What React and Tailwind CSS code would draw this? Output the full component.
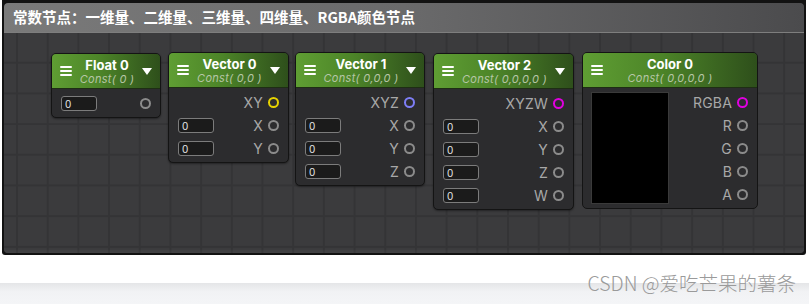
import React from "react";

const Port = ({ label, color }) => (
  <div className="flex items-center ml-auto">
    <span className="text-[14px] leading-none text-[#a8a8a8] tracking-[0.2px]">{label}</span>
    <span
      className="ml-[5px] w-[11px] h-[11px] rounded-full border-[2.5px] box-border"
      style={{ borderColor: color || "#8b8b8b" }}
    />
  </div>
);

const Field = () => (
  <div className="w-[36px] h-[15px] rounded-[3px] border border-[#7c7c7c] bg-[#1b1b1b] flex items-center pl-[3px] text-[10px] leading-none text-[#e6e6e6]">
    0
  </div>
);

const MenuIcon = () => (
  <div className="flex flex-col gap-[2px] w-[12px] shrink-0">
    <span className="h-[2px] bg-white rounded-[1px]" />
    <span className="h-[2px] bg-white rounded-[1px]" />
    <span className="h-[2px] bg-white rounded-[1px]" />
  </div>
);

const Header = ({ title, sub, triangle }) => (
  <div className="h-[35px] flex items-center pl-[8px] pr-[8px] rounded-t-[4px] bg-[linear-gradient(90deg,#5f9e33_0%,#4c8428_45%,#2e4f1b_100%)] border-b border-[#1e2e14]">
    <MenuIcon />
    <div className="flex-1 flex flex-col items-center leading-none pt-[1px]">
      <span className="text-[13px] font-bold text-white">{title}</span>
      <span className="text-[11px] italic text-[#b6c6a6] mt-[2px] tracking-[0.3px]">{sub}</span>
    </div>
    {triangle ? (
      <svg width="10" height="7" viewBox="0 0 10 7" className="shrink-0">
        <polygon points="0,0 10,0 5,7" fill="#ffffff" />
      </svg>
    ) : (
      <div className="w-[12px] shrink-0" />
    )}
  </div>
);

const Node = ({ title, sub, width, rows, extraClass = "" }) => (
  <div
    className={`rounded-[5px] border border-[#141414] bg-[#2c2c2e] shadow-[0_1px_2px_rgba(0,0,0,0.4)] ${extraClass}`}
    style={{ width }}
  >
    <Header title={title} sub={sub} triangle />
    <div className="pt-[3px] pb-[2px]">
      {rows.map((r, i) => (
        <div key={i} className="h-[23px] flex items-center pl-[9px] pr-[9px]">
          {r.field && <Field />}
          <Port label={r.label} color={r.color} />
        </div>
      ))}
    </div>
  </div>
);

const ColorNode = () => (
  <div className="w-[176px] ml-[8px] rounded-[5px] border border-[#141414] bg-[#2c2c2e]">
    <Header title="Color 0" sub="Const( 0,0,0,0 )" />
    <div className="flex pl-[8px] pr-[9px]">
      <div className="mt-[4px] w-[78px] h-[112px] bg-black border border-[#3a3a3a]" />
      <div className="flex-1 pt-[3px] pb-[2px]">
        {[
          { label: "RGBA", color: "#e000e0" },
          { label: "R" },
          { label: "G" },
          { label: "B" },
          { label: "A" },
        ].map((r, i) => (
          <div key={i} className="h-[23px] flex items-center">
            <Port label={r.label} color={r.color} />
          </div>
        ))}
      </div>
    </div>
  </div>
);

export default function App() {
  return (
    <div className="relative w-[809px] h-[304px] bg-white overflow-hidden font-['Inter','Noto_Sans',sans-serif]">
      <div className="ml-[2px] w-[804px] h-[255px] bg-[#121212] pt-[3px] px-[2px] pb-[2px] rounded-b-[3px]">
        <div className="h-full flex flex-col rounded-[4px] overflow-hidden bg-[#3b3b3d]">
          <div className="h-[30px] shrink-0 flex items-center pl-[9px] bg-[linear-gradient(90deg,#7a7a7a_0%,#6a6a6b_50%,#4b4b4d_100%)] border-b border-[#7e7e7e] rounded-t-[4px]">
            <span className="text-[14.5px] font-bold text-white leading-none font-['Noto_Sans_CJK_SC','Noto_Sans',sans-serif]">
              常数节点：一维量、二维量、三维量、四维量、RGBA颜色节点
            </span>
          </div>
          <div className="flex-1 flex items-start pl-[47px] pt-[19px] bg-[#3b3b3d] bg-[linear-gradient(90deg,#343436_2px,transparent_2px),linear-gradient(0deg,#343436_2px,transparent_2px)] bg-[size:30.7px_30.7px] bg-[position:12px_0px] shadow-[inset_0_-3px_2px_rgba(255,255,255,0.04)]">
            <Node
              title="Float 0"
              sub="Const( 0 )"
              width={110}
              extraClass="mt-[1px]"
              rows={[{ field: true, label: "" }]}
            />
            <Node
              title="Vector 0"
              sub="Const( 0,0 )"
              width={121}
              extraClass="ml-[7px]"
              rows={[
                { label: "XY", color: "#e6d200" },
                { field: true, label: "X" },
                { field: true, label: "Y" },
              ]}
            />
            <Node
              title="Vector 1"
              sub="Const( 0,0,0 )"
              width={130}
              extraClass="ml-[6px]"
              rows={[
                { label: "XYZ", color: "#7d7df5" },
                { field: true, label: "X" },
                { field: true, label: "Y" },
                { field: true, label: "Z" },
              ]}
            />
            <Node
              title="Vector 2"
              sub="Const( 0,0,0,0 )"
              width={141}
              extraClass="ml-[8px] mt-[1px]"
              rows={[
                { label: "XYZW", color: "#e000e0" },
                { field: true, label: "X" },
                { field: true, label: "Y" },
                { field: true, label: "Z" },
                { field: true, label: "W" },
              ]}
            />
            <ColorNode />
          </div>
        </div>
      </div>
      <div className="h-[28px]" />
      <div className="h-[21px] bg-[linear-gradient(180deg,#e4e5e7_0%,#f1f2f4_40%,#f4f5f7_100%)]" />
      <div className="absolute right-[13px] top-[273px] text-[19.5px] leading-none text-[#9a9a9a] font-['Noto_Sans_CJK_SC',sans-serif] font-light">
        CSDN @爱吃芒果的薯条
      </div>
    </div>
  );
}
